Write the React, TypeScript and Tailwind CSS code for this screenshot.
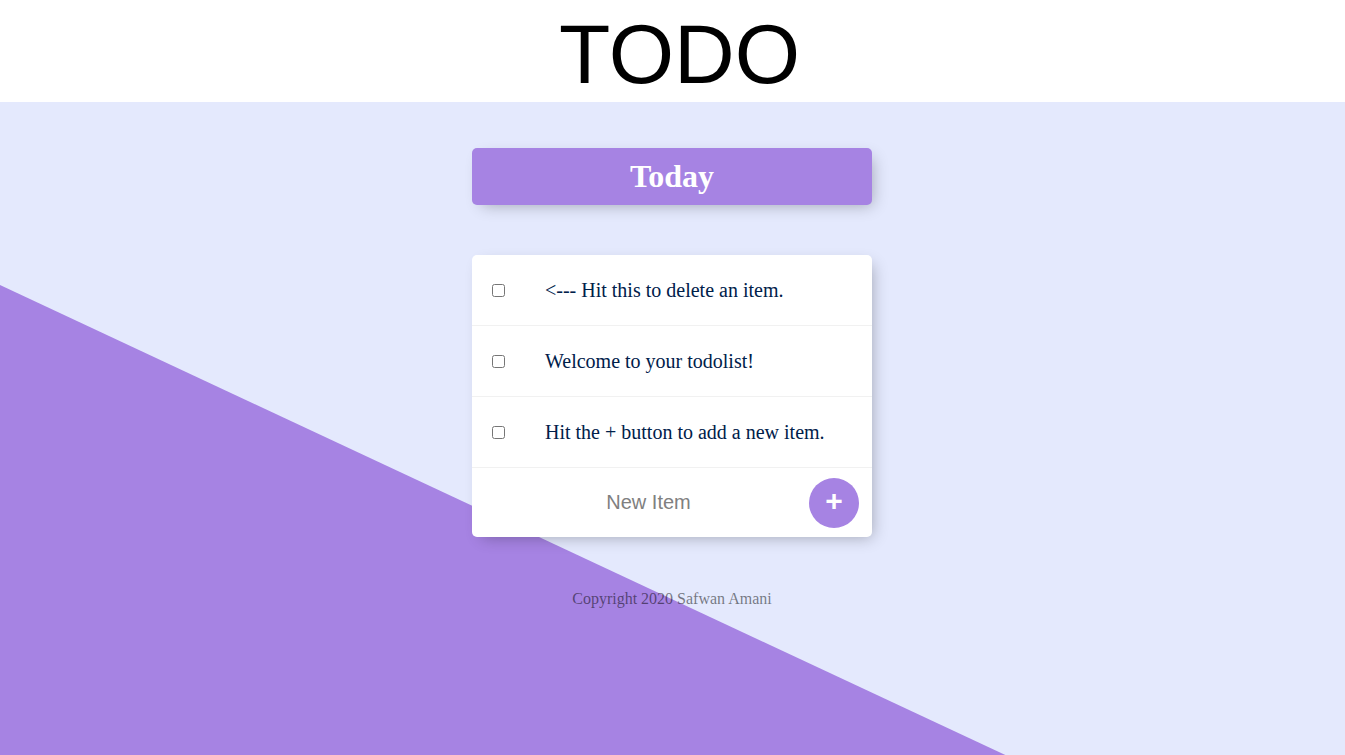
import { useState } from 'react'

const initialItems = [
  '<--- Hit this to delete an item.',
  'Welcome to your todolist!',
  'Hit the + button to add a new item.',
]

export default function App() {
  const [items, setItems] = useState<string[]>(initialItems)
  const [newItem, setNewItem] = useState('')

  const addItem = (e: React.FormEvent) => {
    e.preventDefault()
    if (newItem.trim() === '') return
    setItems([...items, newItem])
    setNewItem('')
  }

  return (
    <div className="min-h-screen bg-[#E4E9FD] overflow-hidden">
      <header className="h-[102px] bg-white pt-[12px] pl-[14px] text-center">
        <h1 className="text-[84px] leading-none text-black font-['Liberation_Sans',Arial,sans-serif]">TODO</h1>
      </header>

      <main className="relative min-h-[653px] font-['Liberation_Serif','Times_New_Roman',serif]">
        {/* diagonal background */}
        <svg className="absolute left-0 top-0 w-full h-full" aria-hidden="true">
          <polygon points="0,183 2000,1118 0,1118" fill="#A683E3" />
        </svg>

        <div className="relative pt-[46px] pr-px">
          <div className="w-[400px] mx-auto bg-[#A683E3] rounded-[5px] shadow-[5px_5px_15px_-5px_rgba(0,0,0,0.3)] py-[10px] text-center">
            <h2 className="text-[32px] leading-[37px] font-bold text-white">Today</h2>
          </div>

          <div className="w-[400px] mx-auto mt-[50px] bg-white rounded-[5px] shadow-[5px_5px_15px_-5px_rgba(0,0,0,0.3)]">
            {items.map((item, i) => (
              <div key={i} className="flex items-center min-h-[71px] border-b border-[#F1F1F1]">
                <input
                  type="checkbox"
                  className="m-[20px] w-[13px] h-[13px]"
                  onChange={() => setItems(items.filter((_, j) => j !== i))}
                />
                <p className="p-[20px] m-0 text-[20px] text-[#00204a] leading-[23px]">{item}</p>
              </div>
            ))}

            <form onSubmit={addItem} className="flex items-center h-[69px] pl-[20px]">
              <input
                type="text"
                value={newItem}
                onChange={(e: React.ChangeEvent<HTMLInputElement>) => setNewItem(e.target.value)}
                placeholder="New Item"
                autoComplete="off"
                className="w-[313px] h-[60px] text-center bg-transparent text-[20px] font-['Liberation_Sans',Arial,sans-serif] placeholder:text-[grey] focus:outline-none"
              />
              <button
                type="submit"
                className="ml-[4px] w-[50px] h-[50px] rounded-full bg-[#A683E3] text-white text-[30px] pb-[3px] leading-none font-bold font-['Liberation_Sans',Arial,sans-serif] flex items-center justify-center"
              >
                +
              </button>
            </form>
          </div>

          <footer className="mt-[50px] text-center text-[16px] text-black/50">
            Copyright 2020 Safwan Amani
          </footer>
        </div>
      </main>
    </div>
  )
}
